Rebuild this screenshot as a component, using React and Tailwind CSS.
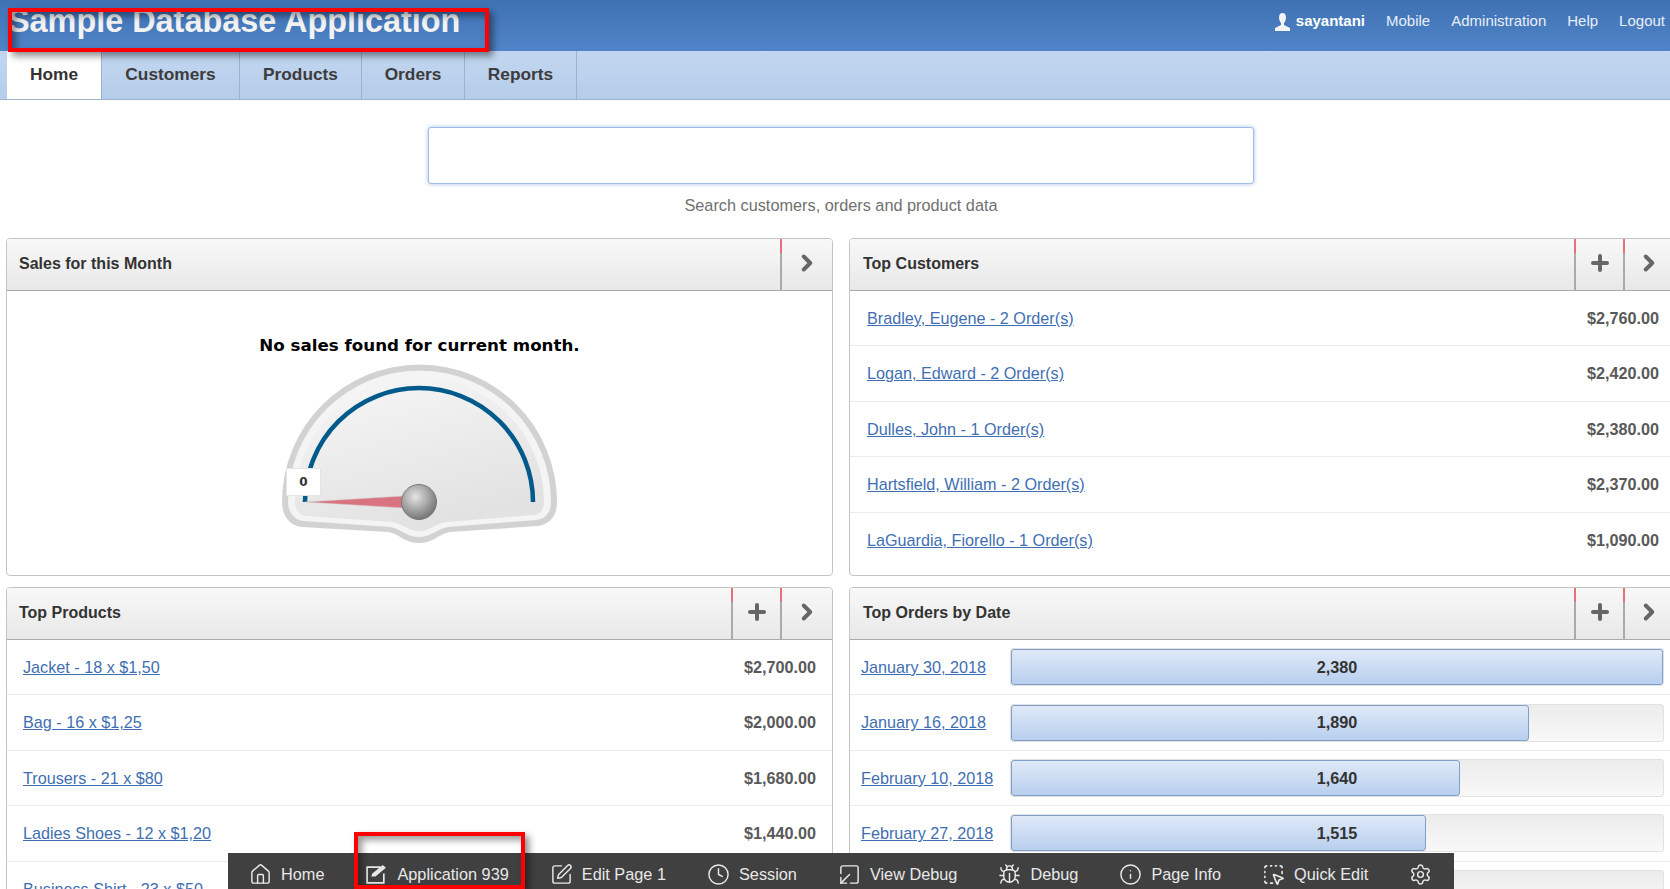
import React from 'react';
import { House, SquarePen, Clock, SquareArrowOutDownLeft, Bug, Info, SquareDashedMousePointer, Settings, Plus, ChevronRight } from 'lucide-react';

const customers = [
  ['Bradley, Eugene - 2 Order(s)', '$2,760.00'],
  ['Logan, Edward - 2 Order(s)', '$2,420.00'],
  ['Dulles, John - 1 Order(s)', '$2,380.00'],
  ['Hartsfield, William - 2 Order(s)', '$2,370.00'],
  ['LaGuardia, Fiorello - 1 Order(s)', '$1,090.00'],
];

// last row runs under the toolbar, its amount can't be seen
const products = [
  ['Jacket - 18 x $1,50', '$2,700.00'],
  ['Bag - 16 x $1,25', '$2,000.00'],
  ['Trousers - 21 x $80', '$1,680.00'],
  ['Ladies Shoes - 12 x $1,20', '$1,440.00'],
  ['Business Shirt - 23 x $50', ''],
];

const orders = [
  ['January 30, 2018', 2380],
  ['January 16, 2018', 1890],
  ['February 10, 2018', 1640],
  ['February 27, 2018', 1515],
  ['', 1090],
];

function AppEditIcon() {
  return (
    <svg width="23" height="21" viewBox="0 0 22 20" fill="none">
      <path d="M15 3H2v15h16V9" stroke="#e8e8e8" strokeWidth="1.6" />
      <path d="M6 12l1-3L17 1l3 2.5L10 12z" fill="#e8e8e8" />
    </svg>
  );
}

const tools = [
  ['Home', <House size={23} strokeWidth={1.5} />],
  ['Application 939', <AppEditIcon />],
  ['Edit Page 1', <SquarePen size={23} strokeWidth={1.5} />],
  ['Session', <Clock size={23} strokeWidth={1.5} />],
  ['View Debug', <SquareArrowOutDownLeft size={23} strokeWidth={1.5} />],
  ['Debug', <Bug size={23} strokeWidth={1.5} />],
  ['Page Info', <Info size={23} strokeWidth={1.5} />],
  ['Quick Edit', <SquareDashedMousePointer size={23} strokeWidth={1.7} />],
];

function HeaderButton({ width, children }) {
  return (
    <div className={`relative flex h-full shrink-0 items-center justify-center border-l-2 border-[#aaaaaa] pb-[3px] text-[#666666] ${width}`}>
      <span className="absolute -left-[2px] top-0 h-[14px] w-[2px] bg-[#e8707a]" />
      {children}
    </div>
  );
}

function Panel({ title, plus, chevronWidth = 'w-[52px]', titleInset = 'pl-[12px]', children, className = '' }) {
  return (
    <section className={`overflow-hidden rounded-[4px] border border-[#c4c4c4] bg-white ${className}`}>
      <div className="flex h-[52px] items-center border-b border-[#aaaaaa] bg-gradient-to-b from-[#f8f8f8] to-[#e8e8e8]">
        <h2 className={`flex-1 pb-[2px] text-[16px] font-bold text-[#333333] ${titleInset}`}>{title}</h2>
        {plus && <HeaderButton width="w-[49px]"><Plus size={24} strokeWidth={4} /></HeaderButton>}
        <HeaderButton width={chevronWidth}><ChevronRight size={26} strokeWidth={3.6} /></HeaderButton>
      </div>
      {children}
    </section>
  );
}

function ListRow({ label, amount, inset }) {
  return (
    <div className={`flex h-[55.4px] items-center justify-between border-b border-[#ebebeb] text-[16.2px] last:border-b-0 ${inset}`}>
      <a href="#" className="text-[#3f6fb2] underline">{label}</a>
      {amount && <span className="font-bold text-[#595959]">{amount}</span>}
    </div>
  );
}

function Gauge() {
  return (
    <svg width="300" height="190" viewBox="270 355 300 190" className="mx-auto block">
      <defs>
        <linearGradient id="face" x1="0" y1="0" x2="0.4" y2="1">
          <stop offset="0" stopColor="#f7f7f7" />
          <stop offset="1" stopColor="#e2e2e2" />
        </linearGradient>
        <radialGradient id="hub" cx="0.4" cy="0.35" r="0.7">
          <stop offset="0" stopColor="#e4e4e4" />
          <stop offset="1" stopColor="#6e6e6e" />
        </radialGradient>
      </defs>
      <path d="M282 502A137.5 137.5 0 0 1 557 502C557 516 550 524 538 526L450 532C438 534 434 543 419 543C404 543 400 534 388 532L302 527C290 526 282 516 282 502Z" fill="#d2d2d2" />
      <path d="M288 502A131.5 131.5 0 0 1 551 502C551 512 546 519 536 520L448 527C436 529 432 537 419 537C406 537 402 529 390 527L304 521C294 520 288 512 288 502Z" fill="#f4f4f4" />
      <path d="M295 502A124.5 124.5 0 0 1 544 502C544 510 540 514 534 515L446 522C434 524 430 531 419 531C408 531 404 524 392 522L306 516C299 515 295 510 295 502Z" fill="url(#face)" />
      <path d="M305 502A114 114 0 0 1 533 502" fill="none" stroke="#005a8c" strokeWidth="4.500" />
      <path d="M305 502L404 496V508Z" fill="#d8737f" stroke="#cfcfcf" strokeWidth="0.5" />
      <circle cx="419" cy="502" r="17.5" fill="url(#hub)" stroke="#777777" />
    </svg>
  );
}

function OrderRow({ label, value }) {
  return (
    <div className="grid h-[55.4px] grid-cols-[149px_1fr] items-center border-b border-[#ebebeb] pl-[11px] pr-[9px] text-[16.2px]">
      <a href="#" className="text-[#3f6fb2] underline">{label}</a>
      <div className="relative h-[38px] w-[654px] overflow-hidden rounded-[3px] border border-[#e2e2e2] bg-gradient-to-b from-[#ececec] to-[#f8f8f8]">
        <div className="h-full rounded-[3px] border border-[#7f9fc6] bg-gradient-to-b from-[#dfe9f8] to-[#b8cfee]" style={{ width: `${(value / 2380) * 100}%` }} />
        {label && <span className="absolute inset-0 flex items-center justify-center font-bold text-[#333333]">{value.toLocaleString('en-US')}</span>}
      </div>
    </div>
  );
}

export default function App() {
  return (
    <div className="relative h-[889px] w-[1670px] overflow-hidden bg-white font-['Liberation_Sans',Arial,sans-serif]">
      <header className="flex h-[51px] items-center justify-between bg-gradient-to-b from-[#3f72b3] to-[#4f84c8] pr-[5px] text-white">
        <h1 className="-mt-[8px] pl-[8px] text-[32.4px] font-bold text-[#f2f2f2]">Sample Database Application</h1>
        <div className="-mt-[8px] flex items-center gap-[21px] text-[15px] text-[#e8eef8]">
          <span className="flex items-center gap-[5px] font-bold text-white">
            <svg width="17" height="18" viewBox="0 0 17 18" fill="#f4f4f4">
              <path d="M8.5 0C6 0 5 2 5 4.500 5 7 6 9 7 10v2L1 15v3h15v-3l-6-3v-2c1-1 2-3 2-5.500C12 2 11 0 8.500 0Z" />
            </svg>
            sayantani
          </span>
          <a href="#">Mobile</a>
          <a href="#">Administration</a>
          <a href="#">Help</a>
          <a href="#">Logout</a>
        </div>
      </header>

      <nav className="flex h-[49px] border-b border-[#9fb3cf] bg-gradient-to-b from-[#c2d6f0] to-[#b5cdea] pl-[7px] text-[17.3px] font-bold text-[#3c3c3c]">
        <a href="#" className="flex w-[95px] items-center justify-center border-r border-[#9db3cd] bg-white text-[#333333]">Home</a>
        <a href="#" className="flex w-[138px] items-center justify-center border-r border-[#9db3cd]">Customers</a>
        <a href="#" className="flex w-[122px] items-center justify-center border-r border-[#9db3cd]">Products</a>
        <a href="#" className="flex w-[103px] items-center justify-center border-r border-[#9db3cd]">Orders</a>
        <a href="#" className="flex w-[112px] items-center justify-center border-r border-[#9db3cd]">Reports</a>
      </nav>

      <div className="flex flex-col items-center pl-[12px] pt-[27px]">
        <input className="h-[57px] w-[826px] rounded-[3px] border border-[#9dbbe5] bg-white shadow-[0_0_4px_rgba(90,140,210,0.55)] outline-none" />
        <p className="mt-[11px] text-[16.3px] leading-[21px] text-[#707070]">Search customers, orders and product data</p>
      </div>

      <main className="mt-[22px] grid grid-cols-[827px_825px] gap-x-[16px] gap-y-[11px] pl-[6px]">
        <Panel title="Sales for this Month" className="h-[338px]">
          <p className="mt-[43px] text-center font-['DejaVu_Sans',sans-serif] text-[16.7px] font-bold leading-[22px] text-black">No sales found for current month.</p>
          <div className="relative -mt-[1px] pl-[1px]">
            <Gauge />
            <span className="absolute left-[279px] top-[113px] flex h-[28px] w-[35px] items-center justify-center border border-[#e4e4e4] bg-white font-['DejaVu_Sans',sans-serif] text-[12px] font-bold text-[#333333]">0</span>
          </div>
        </Panel>

        <Panel title="Top Customers" plus chevronWidth="w-[50px]" titleInset="pl-[13px]" className="h-[338px]">
          {customers.map(([label, amount]) => (
            <ListRow key={label} label={label} amount={amount} inset="pl-[17px] pr-[14px]" />
          ))}
        </Panel>

        <Panel title="Top Products" plus>
          {products.map(([label, amount]) => (
            <ListRow key={label} label={label} amount={amount} inset="pl-[16px] pr-[16px]" />
          ))}
        </Panel>

        <Panel title="Top Orders by Date" plus chevronWidth="w-[50px]" titleInset="pl-[13px]">
          {orders.map(([label, value]) => (
            <OrderRow key={value} label={label} value={value} />
          ))}
        </Panel>
      </main>

      {/* developer toolbar sits on top of the page */}
      <div className="absolute bottom-0 left-[228px] flex h-[36px] w-[1226px] items-center gap-[41px] bg-[#404040] pl-[21px] pt-[7px] text-[16.3px] text-[#e8e8e8]">
        {tools.map(([label, icon]) => (
          <span key={label} className="flex items-center gap-[9px] whitespace-nowrap">
            {icon}
            {label}
          </span>
        ))}
        <Settings size={23} strokeWidth={1.5} />
      </div>

      {/* red annotation boxes */}
      <div className="absolute left-[8px] top-[8px] h-[44px] w-[481px] border-[4px] border-[#ff0000] shadow-[4px_4px_7px_rgba(0,0,0,0.45),inset_4px_4px_7px_rgba(0,0,0,0.4)]" />
      <div className="absolute left-[354px] top-[832px] h-[57px] w-[171px] border-[4px] border-[#ff0000] shadow-[4px_4px_7px_rgba(0,0,0,0.45),inset_4px_4px_7px_rgba(0,0,0,0.4)]" />
    </div>
  );
}
